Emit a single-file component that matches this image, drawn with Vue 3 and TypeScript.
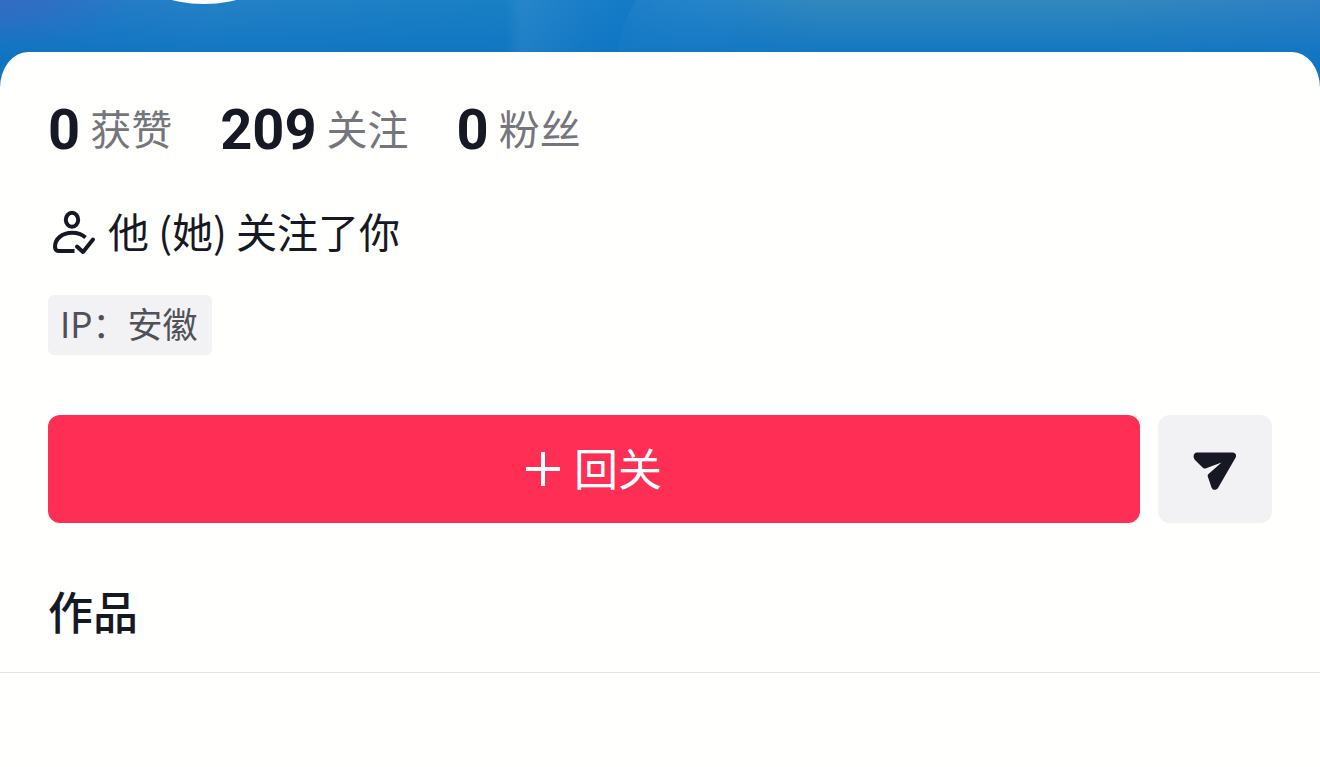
<script setup lang="ts">
interface Stat {
  value: number
  label: string
}

const stats: Stat[] = [
  { value: 0, label: '获赞' },
  { value: 209, label: '关注' },
  { value: 0, label: '粉丝' },
]
</script>

<template>
  <div class="profile">
    <div class="cover" aria-hidden="true">
      <span class="avatar"></span>
      <svg class="streaks" viewBox="0 0 1320 100" preserveAspectRatio="none">
        <defs>
          <linearGradient id="beam" x1="0" x2="1" y1="0" y2="0">
            <stop offset="0" stop-color="#5aa0d8" stop-opacity="0" />
            <stop offset="0.12" stop-color="#5aa0d8" stop-opacity="0.2" />
            <stop offset="0.6" stop-color="#1a7cc8" stop-opacity="0.2" />
            <stop offset="1" stop-color="#0072c6" stop-opacity="0.4" />
          </linearGradient>
          <linearGradient id="edge" x1="0" x2="1" y1="0" y2="0">
            <stop offset="0" stop-color="#1a7cc4" stop-opacity="0.3" />
            <stop offset="1" stop-color="#3c8cc8" stop-opacity="0" />
          </linearGradient>
        </defs>
        <path d="M506 0H636Q618 26 610 100H506Z" fill="url(#beam)" />
        <path d="M636 0H740V100H610Q618 26 636 0Z" fill="url(#edge)" />
      </svg>
    </div>

    <main class="sheet">
      <ul class="stats">
        <li v-for="(stat, index) in stats" :key="index" class="stat">
          <strong class="value">{{ stat.value }}</strong>
          <span class="label">{{ stat.label }}</span>
        </li>
      </ul>

      <p class="relation">
        <svg class="relation-icon" viewBox="0 0 48 48" aria-hidden="true">
          <g fill="none" stroke="#161823" stroke-width="4" stroke-linejoin="round">
            <ellipse cx="24" cy="11.800" rx="6.200" ry="7" />
            <path d="M37.500 29.500C33.500 26 29 24.800 24 24.800C14 24.800 7 31 7 38.500C7 41.500 8 43 10.500 43H26.500" />
            <path d="M29 38.500L35 44L45 31.500" stroke-linecap="round" />
          </g>
        </svg>
        <span class="relation-text">他 (她) 关注了你</span>
      </p>

      <span class="region">IP：安徽</span>

      <div class="actions">
        <button class="follow" type="button">
          <svg class="plus" viewBox="0 0 34 34" aria-hidden="true">
            <path d="M17 0V34M0 17H34" stroke="currentColor" stroke-width="4" />
          </svg>
          <span class="follow-text">回关</span>
        </button>
        <button class="message" type="button" aria-label="私信">
          <svg class="plane" viewBox="0 0 44 44" aria-hidden="true">
            <path
              d="M4 5.500H39.500C42.500 5.500 44 8 42.500 10.800L25 41C23.500 43.500 19.500 43.500 18.500 40.500L14.800 29.500C14.500 28.500 14.700 27.700 15.500 27L28.500 15.500L12.500 21.400C11.500 21.800 10.600 21.600 9.800 20.800L2 13C-0.500 10 0.500 5.500 4 5.500Z"
              fill="#161823"
            />
          </svg>
        </button>
      </div>

      <h2 class="section-title">作品</h2>
    </main>
  </div>
</template>

<style>
body {
  margin: 0;
  background: #fffffe;
}
</style>

<style scoped>
.profile {
  font-family: "Noto Sans CJK SC", sans-serif;
  color: #161823;
}

.cover {
  position: relative;
  height: 100px;
  overflow: hidden;
  background:
    radial-gradient(ellipse 120px 46px at 10px 0, rgba(58, 104, 192, 0.7) 0, rgba(58, 104, 192, 0) 100%),
    linear-gradient(180deg, rgba(14, 116, 194, 0) 0, rgba(14, 116, 194, 0.85) 54px, #0f74c0 80px),
    linear-gradient(90deg, #2375c6 0, #2581c6 16%, #1a80c4 36%, #1b7fc8 46%, #2383cb 53%, #3288bd 62%, #3288bd 84%, #2f80c4 100%);
}

.streaks {
  display: block;
  width: 100%;
  height: 100%;
}

.avatar {
  position: absolute;
  left: 72px;
  bottom: 96px;
  width: 264px;
  height: 264px;
  border-radius: 50%;
  background: #fff;
}

.sheet {
  position: relative;
  margin-top: -48px;
  padding: 48px 48px 0;
  border-radius: 28px 28px 0 0 / 36px 36px 0 0;
  background: #fffffe;
}

.stats {
  display: flex;
  gap: 48px;
  margin: 0;
  padding: 0;
  list-style: none;
}

.stat {
  display: flex;
  align-items: center;
  gap: 10px;
  height: 60px;
}

.value {
  font-family: Roboto, sans-serif;
  font-size: 56px;
  font-weight: 700;
  line-height: 60px;
}

.label {
  padding-bottom: 6px;
  color: #75767b;
  font-size: 41px;
  line-height: 54px;
}

.relation {
  display: flex;
  align-items: center;
  gap: 12px;
  margin: 42px 0 0;
}

.relation-icon {
  flex: none;
  width: 48px;
  height: 48px;
}

.relation-text {
  padding-bottom: 4px;
  font-size: 41px;
  line-height: 56px;
}

.region {
  display: block;
  width: fit-content;
  margin-top: 33px;
  padding: 0 15px 4px 12px;
  border-radius: 6px;
  background: #f2f2f4;
  color: #505158;
  font-size: 35px;
  line-height: 56px;
}

.actions {
  display: flex;
  gap: 18px;
  margin-top: 60px;
}

.follow,
.message {
  display: flex;
  align-items: center;
  justify-content: center;
  height: 108px;
  padding: 0;
  border: 0;
  border-radius: 12px;
  font: inherit;
  cursor: pointer;
}

.follow {
  flex: 1;
  gap: 14px;
  background: #ff2e55;
  color: #fff;
}

.follow-text {
  padding-bottom: 4px;
  font-size: 44px;
  line-height: 56px;
}

.plus {
  width: 34px;
  height: 34px;
}

.message {
  flex: none;
  width: 114px;
  background: #f2f2f4;
}

.plane {
  width: 44px;
  height: 44px;
}

.section-title {
  margin: 58px -48px 0;
  padding: 0 48px 31px;
  border-bottom: 1px solid #e3e3e6;
  font-size: 45px;
  font-weight: 500;
  line-height: 60px;
}
</style>
